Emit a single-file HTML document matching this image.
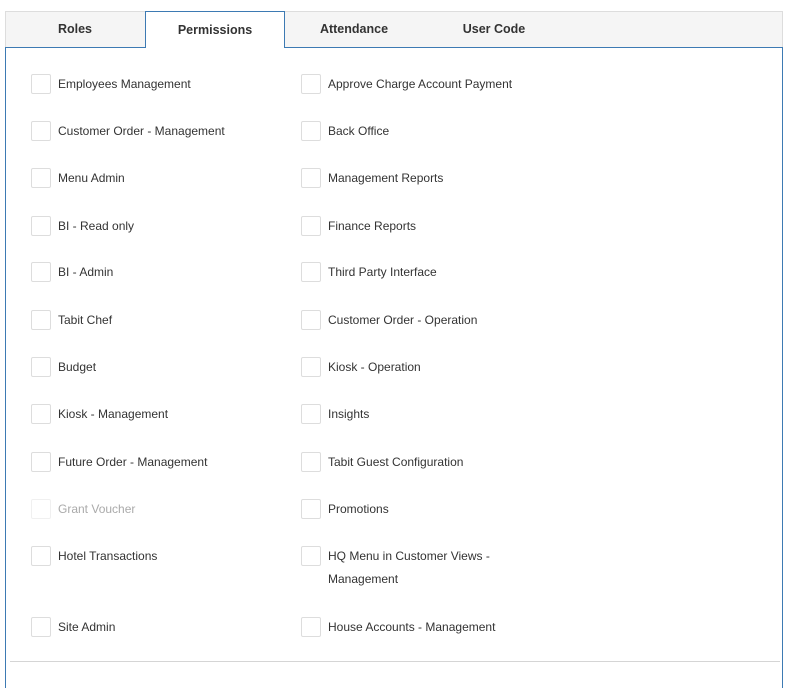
<!DOCTYPE html>
<html><head><style>
body{margin:0;background:#fff;font-family:"Liberation Sans",sans-serif;overflow:hidden;width:792px;height:672px;}
.bar{position:absolute;left:5px;top:11px;width:776px;height:35px;background:#f5f5f5;border:1px solid #ddd;}
.tab{position:absolute;top:11px;height:36px;line-height:36px;text-align:center;font-size:12.5px;font-weight:bold;color:#333;}
.act{background:#fff;border:1px solid #3d7ab3;border-bottom:none;height:36px;line-height:36px;}
.panel{position:absolute;left:5px;top:47px;width:776px;height:640px;border-left:1px solid #3d7ab3;border-right:1px solid #3d7ab3;border-top:1px solid #3d7ab3;}
.hr{position:absolute;left:10px;top:661px;width:770px;height:1px;background:#d5d5d5;}
.it{position:absolute;font-size:12px;color:#333;line-height:23px;}
.cb{position:absolute;width:20px;height:20px;border:1px solid #ddd;border-radius:2px;background:#fff;box-sizing:border-box;}
</style></head><body>
<div class="bar"></div>
<div class="panel"></div>
<div class="tab" style="left:5px;width:140px">Roles</div>
<div class="tab act" style="left:145px;width:138px;">Permissions</div>
<div class="tab" style="left:284px;width:140px">Attendance</div>
<div class="tab" style="left:424px;width:140px">User Code</div>
<div class="hr"></div>
<div id="c"></div>
<script>
var L=["Employees Management","Customer Order - Management","Menu Admin","BI - Read only","BI - Admin","Tabit Chef","Budget","Kiosk - Management","Future Order - Management","Grant Voucher","Hotel Transactions","Site Admin"];
var R=["Approve Charge Account Payment","Back Office","Management Reports","Finance Reports","Third Party Interface","Customer Order - Operation","Kiosk - Operation","Insights","Tabit Guest Configuration","Promotions","HQ Menu in Customer Views -<br>Management","House Accounts - Management"];
var Y=[84,131,178,226,272,320,367,414,462,509,556,627];
var h="";
for(var i=0;i<12;i++){
 var y=Y[i];var g=i==9;
 h+='<div class="cb" style="left:31px;top:'+(y-10)+'px;'+(g?'border-color:#f0f0f0':'')+'"></div>';
 h+='<div class="it" style="left:58px;top:'+(y-11)+'px;'+(g?'color:#aaa':'')+'">'+L[i]+'</div>';
 h+='<div class="cb" style="left:301px;top:'+(y-10)+'px"></div>';
 h+='<div class="it" style="left:328px;top:'+(y-11)+'px">'+R[i]+'</div>';
}
document.getElementById("c").innerHTML=h;
</script>
</body></html>
